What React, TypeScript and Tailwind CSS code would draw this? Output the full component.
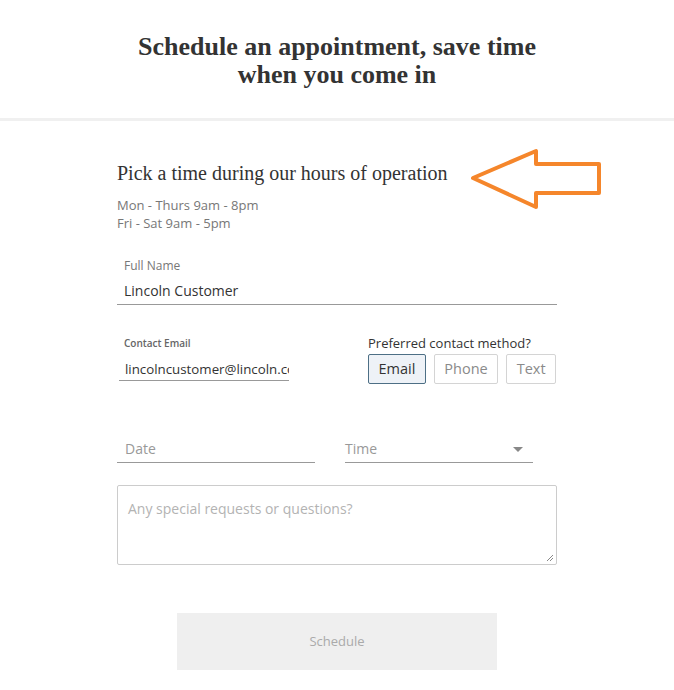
import { useState } from "react";

const METHODS = ["Email", "Phone", "Text"];

function Arrow() {
  return (
    <svg
      className="pointer-events-none absolute left-[470px] top-[147px]"
      width="134"
      height="64"
      viewBox="0 0 134 64"
    >
      <polygon
        points="3,31 66,4 66,17 129,17 129,46 66,46 66,60"
        fill="none"
        stroke="#f5862b"
        strokeWidth="4"
        strokeLinejoin="round"
      />
    </svg>
  );
}

export default function App() {
  const [method, setMethod] = useState("Email");

  return (
    <div className="relative min-h-[690px] bg-white font-['Open_Sans',sans-serif] text-[#333]">
      {/* Header */}
      <header className="border-b-[3px] border-[#f0f0f0] pt-[33px] pb-[29px]">
        <h1 className="mx-auto max-w-[440px] text-center font-['Liberation_Serif',serif] text-[26px] font-bold leading-[28px] text-[#333]">
          Schedule an appointment, save time when you come in
        </h1>
      </header>

      <Arrow />

      <div className="mx-auto w-[440px] pt-[40px]">
        <h2 className="font-['Liberation_Serif',serif] text-[20px] leading-[24px] text-[#333]">
          Pick a time during our hours of operation
        </h2>
        <div className="mt-[11px] text-[13px] leading-[18px] text-[#777]">
          <p>Mon - Thurs 9am - 8pm</p>
          <p>Fri - Sat 9am - 5pm</p>
        </div>

        {/* Full name */}
        <div className="mt-[25px] border-b border-[#999] px-[7px] pb-[3px]">
          <label className="block text-[12px] leading-[17px] text-[#777]">Full Name</label>
          <div className="mt-[7px] text-[14px] leading-[20px] text-[#333]">Lincoln Customer</div>
        </div>

        {/* Email + method */}
        <div className="mt-[31px] flex justify-between">
          <div className="w-[172px] pl-[2px]">
            <label className="block pl-[5px] text-[10px] font-semibold leading-[14px] text-[#666]">
              Contact Email
            </label>
            <input
              readOnly
              value="lincolncustomer@lincoln.com"
              className="mt-[10px] block w-full border-b border-[#999] bg-transparent pl-[6px] pb-[1px] text-[13.3px] leading-[19px] text-[#333] outline-none"
            />
          </div>
          <div className="w-[189px]">
            <p className="text-[13px] leading-[15px] text-[#333]">Preferred contact method?</p>
            <div className="mt-[3px] flex gap-[8px]">
              {METHODS.map((m) => (
                <button
                  key={m}
                  onClick={() => setMethod(m)}
                  className={[
                    "h-[30px] rounded-[2px] border px-[9.5px] text-[14.5px] leading-[18px]",
                    method === m
                      ? "border-[#4d6f85] border-[1.5px] bg-[#eef2f7] text-[#333]"
                      : "border-[#d4d4d4] bg-white text-[#8a8a8a]",
                  ].join(" ")}
                >
                  {m}
                </button>
              ))}
            </div>
          </div>
        </div>

        {/* Date + time */}
        <div className="mt-[55px] flex gap-[30px]">
          <div className="w-[198px] border-b border-[#999] pl-[8px] pb-[3px] text-[14px] leading-[20px] text-[#999]">
            Date
          </div>
          <div className="flex w-[188px] items-center justify-between border-b border-[#999] pr-[10px] pb-[3px] text-[14px] leading-[20px] text-[#999]">
            <span>Time</span>
            <svg width="10" height="5" viewBox="0 0 10 5">
              <polygon points="0,0 10,0 5,5" fill="#888" />
            </svg>
          </div>
        </div>

        {/* Textarea */}
        <div className="relative mt-[22px] h-[80px] rounded-[2px] border border-[#ccc] px-[10px] py-[13px] text-[14px] leading-[20px] text-[#b3b3b3]">
          Any special requests or questions?
          <svg className="absolute bottom-[2px] right-[2px]" width="8" height="8" viewBox="0 0 8 8">
            <line x1="7" y1="1" x2="1" y2="7" stroke="#888" strokeWidth="1" />
            <line x1="7" y1="4" x2="4" y2="7" stroke="#888" strokeWidth="1" />
          </svg>
        </div>

        {/* Submit */}
        <div className="mt-[48px] flex justify-center">
          <button className="h-[57px] w-[320px] bg-[#efefef] text-[13px] text-[#aaa]">Schedule</button>
        </div>
      </div>
    </div>
  );
}
